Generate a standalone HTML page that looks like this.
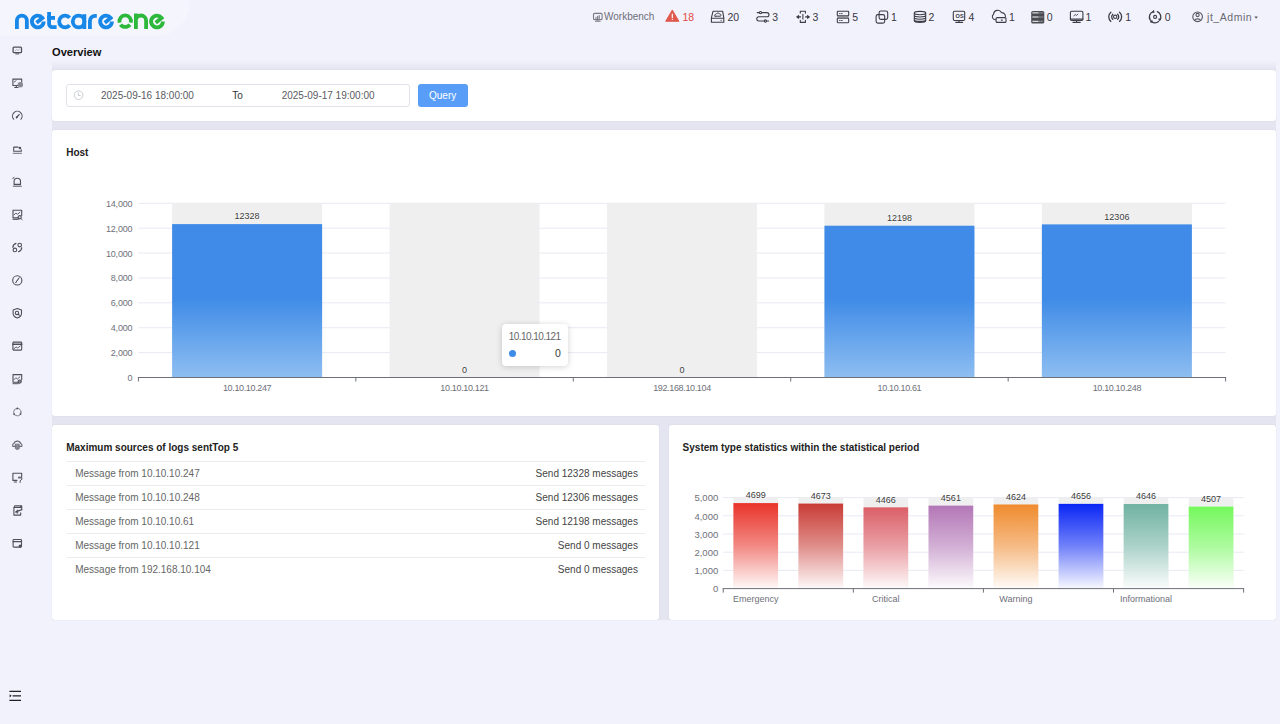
<!DOCTYPE html>
<html><head><meta charset="utf-8">
<style>
*{box-sizing:border-box;margin:0;padding:0}
html,body{width:1280px;height:724px;overflow:hidden;background:#f2f2fd;font-family:"Liberation Sans",sans-serif;position:relative}
.a{position:absolute;white-space:nowrap}
.blob{position:absolute;left:0;top:0;width:190px;height:36px;background:#f5f5fe;border-bottom-right-radius:34px}
.hdr{font-size:11px;color:#33333a;line-height:12px}
.num{top:12px;font-size:10.5px;line-height:10px;color:#38383f}
.wrap{position:absolute;left:52px;top:60px;width:1224px;height:560px;background:linear-gradient(#f2f2fd 0px,#e4e5f0 9px,#e4e5f0 100%)}
.card{position:absolute;background:#fff;border-radius:3px;box-shadow:0 0 2px rgba(40,40,90,0.07)}
.ttl{font-size:10px;font-weight:bold;color:#222;line-height:12px}
</style></head><body>
<div class="blob"></div>
<!-- logo -->
<svg class="a" style="left:0;top:0" width="180" height="40" viewBox="0 0 180 40">
<g fill="none" stroke="#1787e8" stroke-width="3.8">
<path d="M16.9,29 V20.5 A4.975,4.975 0 0 1 26.85,20.5 V29"/>
<path d="M43.70,21.50 A5.9,5.9 0 1 1 42.45,17.87 L36.50,22.80" stroke-linejoin="miter"/>
<path d="M49.1,11.9 V23.9 A3.3,3.3 0 0 0 52.4,27.2 H56.6"/>
<path d="M47.2,17.9 H55"/>
<path d="M69.62,17.71 A5.9,5.9 0 1 0 69.62,25.29"/>
<circle cx="78.6" cy="21.5" r="5.8"/>
<path d="M84.35,14.2 V29"/>
<path d="M89.9,29 V21 A5.2,5.2 0 0 1 95.1,15.8 H96.8"/>
<path d="M111.95,21.50 A5.9,5.9 0 1 1 110.70,17.87 L104.75,22.80" stroke-linejoin="miter"/>
</g>
<g fill="none" stroke="#2cb83a" stroke-width="3.8">
<path d="M119.62,22.59 A5.75,5.75 0 1 1 130.78,22.59"/><path d="M129.85,24.58 A5.75,5.75 0 0 1 120.55,24.58"/>
<path d="M135.9,29 V13.6 M135.9,20.6 A5.1,5.1 0 0 1 146.1,20.6 V29"/>
<path d="M162.90,21.50 A5.9,5.9 0 1 1 161.65,17.87 L155.70,22.80" stroke-linejoin="miter"/>
</g>
</svg>
<!-- header -->
<svg class="a" style="left:0;top:0" width="1280" height="36" viewBox="0 0 1280 36">
<g fill="none" stroke="#3d3d45" stroke-width="1.1" stroke-linecap="round" stroke-linejoin="round">
 <!-- workbench -->
 <g stroke="#7a7a84"><rect x="593.5" y="13.4" width="8.6" height="6.2" rx="1"/><path d="M597.8,19.8V21.2M595.5,21.3H600.1M596,18.4V17.3M597.6,18.4V16.3M599.2,18.4V15.6"/></g>
 <!-- warning -->
 <path d="M672.3,10.4 L678.8,21.2 H665.8 Z" fill="#e0584e" stroke="#e0584e"/>
 <path d="M672.3,14.2V17.6M672.3,19.4V19.5" stroke="#fff" stroke-width="1.2"/>
 <!-- drive -->
 <path d="M713,11.3 H722.7 L723.8,17.8 V22.3 H711.4 V17.8 Z M711.4,18.2 H723.8"/>
 <circle cx="721.1" cy="20.4" r="0.55" fill="#3d3d45" stroke="none"/>
 <path d="M715.1,16.2 H720.6 A1.4,1.4 0 0 0 719.7,13.9 A2.1,2.1 0 0 0 716.1,14.3 A1.1,1.1 0 0 0 715.1,16.2 Z" stroke-width="1"/>
 <!-- route -->
 <path d="M757.2,12.6 H766.9 A2.05,2.05 0 0 1 766.9,16.7 H758.9 A2.15,2.15 0 0 0 758.9,21 H768.7"/>
 <circle cx="760.5" cy="12.6" r="1.1" fill="#f2f2fd"/><circle cx="765.4" cy="21" r="1.1" fill="#f2f2fd"/>
 <!-- transfer -->
 <path d="M800.3,13.1 V11.2 H805.4 V13.1 M800.3,20.2 V22.4 H805.4 V20.2 M802.9,14.3 V19.1 M797.4,16.9 H800.6 M805.6,16.9 H808.8"/>
 <path d="M796.8,16.9 L798.6,15.6 V18.2 Z M809.3,16.9 L807.5,15.6 V18.2 Z" fill="#3d3d45"/>
 <!-- server -->
 <rect x="837.3" y="11.3" width="11.4" height="4.5" rx="0.6"/><rect x="837.3" y="18.3" width="11.4" height="4.4" rx="0.6"/>
 <rect x="837.3" y="15.9" width="11.4" height="2.3" fill="#8a8a92" stroke="none"/>
 <path d="M839.4,13.6H839.5M840.9,13.6H842.2M839.4,20.5H839.5M840.9,20.5H842.2" stroke-width="0.9"/>
 <!-- copy -->
 <rect x="879.1" y="11" width="8.6" height="8.4" rx="1.8"/><rect x="876.1" y="14.6" width="8.6" height="8.5" rx="1.8"/>
 <!-- database -->
 <ellipse cx="920" cy="13.1" rx="5.7" ry="1.7"/>
 <path d="M914.3,13.1 V20.8 A5.7,1.7 0 0 0 925.7,20.8 V13.1 M914.3,15.3 A5.7,1.7 0 0 0 925.7,15.3 M914.3,17.5 A5.7,1.7 0 0 0 925.7,17.5 M914.3,19.7 A5.7,1.7 0 0 0 925.7,19.7"/>
 <!-- os -->
 <rect x="953.3" y="11.3" width="11.4" height="9.2" rx="1.2"/><path d="M959,20.6V22.3M955.8,22.4H962.6"/>
 <!-- cloud -->
 <path d="M995.4,19.6 A2.9,2.9 0 0 1 993.6,14.3 A4.1,4.1 0 0 1 1001.4,12.6 A3.8,3.8 0 0 1 1005.4,16.6"/>
 <rect x="996.1" y="17.6" width="9.9" height="4.8" rx="1"/><path d="M1001.3,20.1H1002.3"/>
 <!-- rack -->
 <rect x="1031.2" y="10.9" width="13.1" height="12.6" rx="1.6" fill="#4a4a52" stroke="none"/>
 <path d="M1032.8,12.9H1038.2M1032.8,17H1038.2M1032.8,21.3H1038.2" stroke="#fff" stroke-width="1"/>
 <path d="M1039.4,12.9H1043M1039.4,17H1043M1039.4,21.3H1043" stroke="#b0b0b8" stroke-width="0.8" stroke-dasharray="0.8 0.9"/>
 <!-- monitor -->
 <rect x="1070.4" y="11.3" width="12.5" height="9.2" rx="1.2"/><path d="M1070.4,19.1H1082.9M1076.6,20.6V22.2M1073,22.4H1080.2"/>
 <path d="M1073.8,15.8 L1075.3,14.5 L1076.4,15.5 L1077.8,14.2" stroke-width="0.9"/>
 <!-- signal -->
 <circle cx="1115.2" cy="16.8" r="1.7"/>
 <path d="M1112.8,14.2 A3.6,3.6 0 0 0 1112.8,19.4 M1110.9,12.2 A6,6 0 0 0 1110.9,21.4 M1117.6,14.2 A3.6,3.6 0 0 1 1117.6,19.4 M1119.5,12.2 A6,6 0 0 1 1119.5,21.4" stroke-width="1.3"/>
 <!-- ring -->
 <circle cx="1155.1" cy="16.9" r="1.5"/>
 <path d="M1150.2,19.9 A5.7,5.7 0 0 1 1153.3,11.5 M1157.3,11.6 A5.7,5.7 0 0 1 1159.9,20 M1158.6,21.6 A5.7,5.7 0 0 1 1151.3,21.2" stroke-width="1.3"/>
 <path d="M1153.8,10.6 L1154.2,12.6 L1152.3,12.4 Z M1160.8,19.3 L1159.2,20.8 L1158.8,19 Z M1151,22.6 L1150.3,20.7 L1152.2,20.8 Z" fill="#3d3d45" stroke-width="0.6"/>
 <!-- user -->
 <g stroke="#55555d"><circle cx="1197.6" cy="16.8" r="4.8"/><circle cx="1197.6" cy="15" r="1.6"/><path d="M1194.6,20.6 A3.2,2.6 0 0 1 1200.6,20.6"/></g>
 <path d="M1254.4,16.4 H1257.9 L1256.15,18.8 Z" fill="#55555d" stroke="none"/>
</g>
<text x="955.4" y="17.7" font-family="Liberation Sans" font-weight="bold" font-size="5.6" fill="#3d3d45" letter-spacing="0.2">OS</text>
</svg>
<div class="a hdr" style="left:604px;top:12px;color:#6e6e78;font-size:10px;line-height:10px">Workbench</div>
<div class="a hdr" style="left:682.5px;top:12px;color:#e5483f;font-size:10.5px;line-height:10px">18</div>
<div class="a hdr num" style="left:727.5px">20</div>
<div class="a hdr num" style="left:772.2px">3</div>
<div class="a hdr num" style="left:812.5px">3</div>
<div class="a hdr num" style="left:852.2px">5</div>
<div class="a hdr num" style="left:891px">1</div>
<div class="a hdr num" style="left:928.5px">2</div>
<div class="a hdr num" style="left:968.5px">4</div>
<div class="a hdr num" style="left:1009px">1</div>
<div class="a hdr num" style="left:1046.8px">0</div>
<div class="a hdr num" style="left:1085.6px">1</div>
<div class="a hdr num" style="left:1125.2px">1</div>
<div class="a hdr num" style="left:1164.8px">0</div>
<div class="a hdr" style="left:1207px;top:12px;color:#6a6a72;font-size:10.5px;line-height:10px;letter-spacing:0.55px">jt_Admin</div>

<!-- sidebar -->
<svg class="a" style="left:0;top:36px" width="46" height="520" viewBox="0 36 46 520"><g fill="none" stroke="#4f4f58" stroke-width="1.1" stroke-linecap="round" stroke-linejoin="round"><g transform="translate(17.3,50.30)"><rect x="-4.2" y="-3.2" width="8.4" height="5.6" rx="1" stroke-width="1.3"/><path d="M-1.6,3.6H1.6" stroke-width="1"/><path d="M-2.2,0.6L-0.6,-0.8L0.6,0.2L2.2,-1.2" stroke-width="0.8" stroke="#9a9aa4"/></g><g transform="translate(17.3,83.17)"><path d="M2.2,2.4H-4.4V-4H4.4V-1"/><path d="M-1,2.5V4.2M-2.6,4.3H0.8"/><circle cx="3" cy="1.6" r="2.2" fill="#8a8a94" stroke="#8a8a94"/><path d="M-3,-1.2 L-1.2,-2.5" stroke-width="0.9"/></g><g transform="translate(17.3,116.04)"><path d="M-3.6,3.2 A4.8,4.8 0 1 1 3.6,3.2"/><path d="M-0.8,1.6 L1.8,-1.4" stroke-width="1.4"/><circle cx="-0.5" cy="1.3" r="1" fill="#4f4f58" stroke="none"/></g><g transform="translate(17.3,148.91)"><path d="M-3.6,-1.8V2.4H4V0.8M-3.6,-1.8H0.8"/><circle cx="2.6" cy="-0.9" r="1.3" fill="#4f4f58" stroke="none"/><path d="M-4,4.4H4.2" stroke="#8a8a94" stroke-width="1.2"/></g><g transform="translate(17.3,181.78)"><path d="M-3.2,2.6V-0.4 A3.2,3.2 0 0 1 3.2,-0.4 V2.6Z"/><path d="M-4,4.4H4M-4.6,-3 L-3.2,-4.6" stroke-width="1"/></g><g transform="translate(17.3,214.65)"><path d="M1.5,3.2H-4.3V-4.4H4.4V0.8"/><path d="M-3.2,0.2 L-1.5,-1.6 L0.3,-0.4 L2.6,-2.4" stroke-width="0.9"/><circle cx="2.4" cy="2.6" r="1.6"/><path d="M3.6,3.8L4.8,5M-4.3,4.7H1" stroke-width="1"/></g><g transform="translate(17.3,247.52)"><circle cx="2.4" cy="-2.4" r="1.8"/><circle cx="-2.4" cy="2.4" r="1.8"/><path d="M-4.39,-0.23 A4.4,4.4 0 0 1 -1.36,-4.18 M4.39,0.23 A4.4,4.4 0 0 1 1.36,4.18" stroke-width="1.25"/></g><g transform="translate(17.3,280.39)"><circle cx="0" cy="0" r="4.6"/><path d="M1.8,-2.6 L-0.4,0.4 L-1.8,2.6 L0.4,-0.4 Z" fill="#4f4f58" stroke-width="0.8"/></g><g transform="translate(17.3,313.26)"><path d="M0,-4.8 L4.2,-3.2 V0.2 C4.2,2.6 2.2,4 0,4.8 C-2.2,4 -4.2,2.6 -4.2,0.2 V-3.2 Z"/><circle cx="-0.3" cy="-0.3" r="1.7"/><path d="M0.9,0.9L2,2"/></g><g transform="translate(17.3,346.13)"><rect x="-4.4" y="-4" width="8.8" height="8" rx="0.8"/><path d="M-4.4,-1.9H4.4" stroke-width="1.6"/><path d="M-3.6,3 L-1.4,0.8 L0.4,1.8 L3,-0.2" stroke-width="0.9"/></g><g transform="translate(17.3,379.00)"><path d="M1.5,3.2H-4.3V-4.4H4.4V0.8"/><path d="M-3.2,0.6 L-1.5,-1.2 L0.3,0 L2.6,-2.2" stroke-width="0.9"/><circle cx="2.4" cy="2.6" r="1.6" fill="#8a8a94"/><path d="M-4.3,4.7H1" stroke-width="1"/></g><g transform="translate(17.3,411.87)"><circle cx="0" cy="0.3" r="3.7" stroke="#7a7a84" stroke-width="0.9"/><circle cx="0" cy="-3.4" r="0.9" fill="#4f4f58" stroke="none"/><circle cx="-3.2" cy="2.2" r="0.9" fill="#4f4f58" stroke="none"/><circle cx="3.2" cy="2.2" r="0.9" fill="#4f4f58" stroke="none"/></g><g transform="translate(17.3,444.74)"><path d="M-2.4,1.6 H-4.4 A1.9,1.9 0 0 1 -3.4,-1.2 A3.6,3.6 0 0 1 3.4,-1.2 A1.9,1.9 0 0 1 4.4,1.6 H2.4" stroke="#6a6a74"/><path d="M-1.9,-0.2V3.8A1.9,0.8 0 0 0 1.9,3.8V-0.2Z" fill="#8a8a94" stroke="#6a6a74" stroke-width="0.9"/></g><g transform="translate(17.3,477.61)"><path d="M-0.4,2.8H-4.4V-4.4H4.4V-1"/><path d="M-3,4.4H-0.8"/><path d="M1,0.2H4.6V1.6L2.8,3.2V4.8" stroke-width="1"/><path d="M1.8,0.2V-1M3.8,0.2V-1" stroke-width="0.8"/></g><g transform="translate(17.3,510.48)"><path d="M-3.4,-3V4.6H3.4V2.4M-3.4,-3 L-2.6,-4.6H4.4V-1.4 M3.4,-4.6V-3.2 M-3.4,-3H3.4"/><path d="M4.6,-0.8 L-1,1.2" stroke-width="1.2"/><path d="M-1.8,1.4 L0.4,-0.6 L0.6,2.6 Z" fill="#4f4f58" stroke-width="0.6"/></g><g transform="translate(17.3,543.35)"><rect x="-4.2" y="-3.8" width="8.4" height="7.6" rx="0.8"/><path d="M-4.2,-1.8H4.2" stroke-width="1.3"/><circle cx="2.8" cy="2.6" r="1.5" fill="#4f4f58" stroke="none"/></g></g></svg>
<svg class="a" style="left:0;top:680px" width="40" height="30" viewBox="0 680 40 30"><g stroke="#222" stroke-width="1.2"><path d="M9.4,691.4H21M12.6,695.8H21M9.4,700.4H21"/></g><path d="M9.6,694.2 L11.6,695.8 L9.6,697.4Z" fill="#222"/></svg>
<div class="a" style="left:52px;top:46px;font-size:11.1px;font-weight:bold;color:#111">Overview</div>

<div class="wrap">
 <div class="card" style="left:0;top:10px;width:1224px;height:51px"></div>
 <div class="card" style="left:0;top:70px;width:1224px;height:286px"></div>
 <div class="card" style="left:0;top:365px;width:607px;height:195px"></div>
 <div class="card" style="left:617px;top:365px;width:607px;height:195px"></div>
</div>
<div class="a" style="left:66px;top:84px;width:344px;height:23px;border:1px solid #e1e3ea;border-radius:3px"></div>
<svg class="a" style="left:72px;top:89px" width="14" height="14" viewBox="0 0 14 14"><g fill="none" stroke="#c3c6ce" stroke-width="0.9"><circle cx="6.6" cy="6.2" r="4.3"/><path d="M6.4,3.7V6.5H8.6"/></g></svg>
<div class="a" style="top:91px;font-size:10px;line-height:10px;color:#5a5a62;font-weight:normal;left:101.00px;">2025-09-16 18:00:00</div>
<div class="a" style="top:91px;font-size:10px;line-height:10px;color:#303036;font-weight:normal;left:232.30px;">To</div>
<div class="a" style="top:91px;font-size:10px;line-height:10px;color:#5a5a62;font-weight:normal;left:281.70px;">2025-09-17 19:00:00</div>
<div class="a" style="left:418px;top:84px;width:50px;height:23px;background:#589ef8;border-radius:3px"></div>
<div class="a" style="top:91px;font-size:10px;line-height:10px;color:#fff;font-weight:normal;left:429.00px;">Query</div>
<div class="a" style="top:148px;font-size:10px;line-height:10px;color:#222;font-weight:bold;left:66.20px;">Host</div>
<svg class="a" style="left:0;top:0" width="1280" height="724" viewBox="0 0 1280 724">
<defs><linearGradient id="hb" x1="0" y1="0" x2="0" y2="1"><stop offset="0" stop-color="#3f8be7"/><stop offset="0.48" stop-color="#3f8be7"/><stop offset="1" stop-color="#8ebef1"/></linearGradient>
<linearGradient id="g0" x1="0" y1="0" x2="0" y2="1"><stop offset="0" stop-color="#e9342a"/><stop offset="0.5" stop-color="#e9342a" stop-opacity="0.58"/><stop offset="1" stop-color="#e9342a" stop-opacity="0.03"/></linearGradient>
<linearGradient id="g1" x1="0" y1="0" x2="0" y2="1"><stop offset="0" stop-color="#c93c36"/><stop offset="0.5" stop-color="#c93c36" stop-opacity="0.58"/><stop offset="1" stop-color="#c93c36" stop-opacity="0.03"/></linearGradient>
<linearGradient id="g2" x1="0" y1="0" x2="0" y2="1"><stop offset="0" stop-color="#db5f68"/><stop offset="0.5" stop-color="#db5f68" stop-opacity="0.58"/><stop offset="1" stop-color="#db5f68" stop-opacity="0.03"/></linearGradient>
<linearGradient id="g3" x1="0" y1="0" x2="0" y2="1"><stop offset="0" stop-color="#b377b7"/><stop offset="0.5" stop-color="#b377b7" stop-opacity="0.58"/><stop offset="1" stop-color="#b377b7" stop-opacity="0.03"/></linearGradient>
<linearGradient id="g4" x1="0" y1="0" x2="0" y2="1"><stop offset="0" stop-color="#ef8b2e"/><stop offset="0.5" stop-color="#ef8b2e" stop-opacity="0.58"/><stop offset="1" stop-color="#ef8b2e" stop-opacity="0.03"/></linearGradient>
<linearGradient id="g5" x1="0" y1="0" x2="0" y2="1"><stop offset="0" stop-color="#0a26f5"/><stop offset="0.5" stop-color="#0a26f5" stop-opacity="0.58"/><stop offset="1" stop-color="#0a26f5" stop-opacity="0.03"/></linearGradient>
<linearGradient id="g6" x1="0" y1="0" x2="0" y2="1"><stop offset="0" stop-color="#70b2a2"/><stop offset="0.5" stop-color="#70b2a2" stop-opacity="0.58"/><stop offset="1" stop-color="#70b2a2" stop-opacity="0.03"/></linearGradient>
<linearGradient id="g7" x1="0" y1="0" x2="0" y2="1"><stop offset="0" stop-color="#74f85c"/><stop offset="0.5" stop-color="#74f85c" stop-opacity="0.58"/><stop offset="1" stop-color="#74f85c" stop-opacity="0.03"/></linearGradient>
</defs>
<rect x="138.4" y="352.11" width="1087.2" height="1" fill="#e8eaf4"/>
<rect x="138.4" y="327.23" width="1087.2" height="1" fill="#e8eaf4"/>
<rect x="138.4" y="302.34" width="1087.2" height="1" fill="#e8eaf4"/>
<rect x="138.4" y="277.46" width="1087.2" height="1" fill="#e8eaf4"/>
<rect x="138.4" y="252.57" width="1087.2" height="1" fill="#e8eaf4"/>
<rect x="138.4" y="227.69" width="1087.2" height="1" fill="#e8eaf4"/>
<rect x="138.4" y="202.80" width="1087.2" height="1" fill="#e8eaf4"/>
<rect x="172.12" y="203.30" width="150" height="174.20" fill="#efefef"/>
<rect x="172.12" y="224.10" width="150" height="153.40" fill="url(#hb)"/>
<rect x="389.56" y="203.30" width="150" height="174.20" fill="#efefef"/>
<rect x="607.00" y="203.30" width="150" height="174.20" fill="#efefef"/>
<rect x="824.44" y="203.30" width="150" height="174.20" fill="#efefef"/>
<rect x="824.44" y="225.72" width="150" height="151.78" fill="url(#hb)"/>
<rect x="1041.88" y="203.30" width="150" height="174.20" fill="#efefef"/>
<rect x="1041.88" y="224.38" width="150" height="153.12" fill="url(#hb)"/>
<rect x="137.9" y="377.0" width="1088.2" height="1" fill="#6e7079"/>
<rect x="137.90" y="377.5" width="1" height="4" fill="#6e7079"/>
<rect x="355.34" y="377.5" width="1" height="4" fill="#6e7079"/>
<rect x="572.78" y="377.5" width="1" height="4" fill="#6e7079"/>
<rect x="790.22" y="377.5" width="1" height="4" fill="#6e7079"/>
<rect x="1007.66" y="377.5" width="1" height="4" fill="#6e7079"/>
<rect x="1225.10" y="377.5" width="1" height="4" fill="#6e7079"/>
<rect x="723.2" y="569.90" width="520.4" height="1" fill="#e8eaf4"/>
<rect x="723.2" y="551.70" width="520.4" height="1" fill="#e8eaf4"/>
<rect x="723.2" y="533.50" width="520.4" height="1" fill="#e8eaf4"/>
<rect x="723.2" y="515.30" width="520.4" height="1" fill="#e8eaf4"/>
<rect x="723.2" y="497.10" width="520.4" height="1" fill="#e8eaf4"/>
<rect x="733.38" y="497.60" width="44.7" height="91.00" fill="#efefef"/>
<rect x="733.38" y="503.08" width="44.7" height="85.52" fill="#fff"/>
<rect x="733.38" y="503.08" width="44.7" height="85.52" fill="url(#g0)"/>
<rect x="798.42" y="497.60" width="44.7" height="91.00" fill="#efefef"/>
<rect x="798.42" y="503.55" width="44.7" height="85.05" fill="#fff"/>
<rect x="798.42" y="503.55" width="44.7" height="85.05" fill="url(#g1)"/>
<rect x="863.48" y="497.60" width="44.7" height="91.00" fill="#efefef"/>
<rect x="863.48" y="507.32" width="44.7" height="81.28" fill="#fff"/>
<rect x="863.48" y="507.32" width="44.7" height="81.28" fill="url(#g2)"/>
<rect x="928.52" y="497.60" width="44.7" height="91.00" fill="#efefef"/>
<rect x="928.52" y="505.59" width="44.7" height="83.01" fill="#fff"/>
<rect x="928.52" y="505.59" width="44.7" height="83.01" fill="url(#g3)"/>
<rect x="993.57" y="497.60" width="44.7" height="91.00" fill="#efefef"/>
<rect x="993.57" y="504.44" width="44.7" height="84.16" fill="#fff"/>
<rect x="993.57" y="504.44" width="44.7" height="84.16" fill="url(#g4)"/>
<rect x="1058.62" y="497.60" width="44.7" height="91.00" fill="#efefef"/>
<rect x="1058.62" y="503.86" width="44.7" height="84.74" fill="#fff"/>
<rect x="1058.62" y="503.86" width="44.7" height="84.74" fill="url(#g5)"/>
<rect x="1123.67" y="497.60" width="44.7" height="91.00" fill="#efefef"/>
<rect x="1123.67" y="504.04" width="44.7" height="84.56" fill="#fff"/>
<rect x="1123.67" y="504.04" width="44.7" height="84.56" fill="url(#g6)"/>
<rect x="1188.72" y="497.60" width="44.7" height="91.00" fill="#efefef"/>
<rect x="1188.72" y="506.57" width="44.7" height="82.03" fill="#fff"/>
<rect x="1188.72" y="506.57" width="44.7" height="82.03" fill="url(#g7)"/>
<rect x="722.7" y="588.1" width="521.4" height="1" fill="#6e7079"/>
<rect x="722.70" y="588.6" width="1" height="4" fill="#6e7079"/>
<rect x="852.80" y="588.6" width="1" height="4" fill="#6e7079"/>
<rect x="982.90" y="588.6" width="1" height="4" fill="#6e7079"/>
<rect x="1113.00" y="588.6" width="1" height="4" fill="#6e7079"/>
<rect x="1243.10" y="588.6" width="1" height="4" fill="#6e7079"/>
</svg>
<div class="a" style="top:374px;font-size:9px;line-height:9px;color:#6e7079;font-weight:normal;letter-spacing:-0.2px;right:1147.70px;">0</div>
<div class="a" style="top:349px;font-size:9px;line-height:9px;color:#6e7079;font-weight:normal;letter-spacing:-0.2px;right:1147.70px;">2,000</div>
<div class="a" style="top:324px;font-size:9px;line-height:9px;color:#6e7079;font-weight:normal;letter-spacing:-0.2px;right:1147.70px;">4,000</div>
<div class="a" style="top:299px;font-size:9px;line-height:9px;color:#6e7079;font-weight:normal;letter-spacing:-0.2px;right:1147.70px;">6,000</div>
<div class="a" style="top:274px;font-size:9px;line-height:9px;color:#6e7079;font-weight:normal;letter-spacing:-0.2px;right:1147.70px;">8,000</div>
<div class="a" style="top:250px;font-size:9px;line-height:9px;color:#6e7079;font-weight:normal;letter-spacing:-0.2px;right:1147.70px;">10,000</div>
<div class="a" style="top:225px;font-size:9px;line-height:9px;color:#6e7079;font-weight:normal;letter-spacing:-0.2px;right:1147.70px;">12,000</div>
<div class="a" style="top:200px;font-size:9px;line-height:9px;color:#6e7079;font-weight:normal;letter-spacing:-0.2px;right:1147.70px;">14,000</div>
<div class="a" style="top:212px;font-size:9px;line-height:9px;color:#3a3a3a;font-weight:normal;left:147.12px;width:200px;text-align:center;text-shadow:0 0 2px #fff,0 0 1px #fff;">12328</div>
<div class="a" style="top:384px;font-size:9px;line-height:9px;color:#6e7079;font-weight:normal;letter-spacing:-0.35px;left:147.12px;width:200px;text-align:center;">10.10.10.247</div>
<div class="a" style="top:366px;font-size:9px;line-height:9px;color:#3a3a3a;font-weight:normal;left:364.56px;width:200px;text-align:center;text-shadow:0 0 2px #fff,0 0 1px #fff;">0</div>
<div class="a" style="top:384px;font-size:9px;line-height:9px;color:#6e7079;font-weight:normal;letter-spacing:-0.35px;left:364.56px;width:200px;text-align:center;">10.10.10.121</div>
<div class="a" style="top:366px;font-size:9px;line-height:9px;color:#3a3a3a;font-weight:normal;left:582.00px;width:200px;text-align:center;text-shadow:0 0 2px #fff,0 0 1px #fff;">0</div>
<div class="a" style="top:384px;font-size:9px;line-height:9px;color:#6e7079;font-weight:normal;letter-spacing:-0.35px;left:582.00px;width:200px;text-align:center;">192.168.10.104</div>
<div class="a" style="top:214px;font-size:9px;line-height:9px;color:#3a3a3a;font-weight:normal;left:799.44px;width:200px;text-align:center;text-shadow:0 0 2px #fff,0 0 1px #fff;">12198</div>
<div class="a" style="top:384px;font-size:9px;line-height:9px;color:#6e7079;font-weight:normal;letter-spacing:-0.35px;left:799.44px;width:200px;text-align:center;">10.10.10.61</div>
<div class="a" style="top:213px;font-size:9px;line-height:9px;color:#3a3a3a;font-weight:normal;left:1016.88px;width:200px;text-align:center;text-shadow:0 0 2px #fff,0 0 1px #fff;">12306</div>
<div class="a" style="top:384px;font-size:9px;line-height:9px;color:#6e7079;font-weight:normal;letter-spacing:-0.35px;left:1016.88px;width:200px;text-align:center;">10.10.10.248</div>
<div class="a" style="top:584px;font-size:9.5px;line-height:9.5px;color:#6e7079;font-weight:normal;right:561.80px;">0</div>
<div class="a" style="top:566px;font-size:9.5px;line-height:9.5px;color:#6e7079;font-weight:normal;right:561.80px;">1,000</div>
<div class="a" style="top:548px;font-size:9.5px;line-height:9.5px;color:#6e7079;font-weight:normal;right:561.80px;">2,000</div>
<div class="a" style="top:530px;font-size:9.5px;line-height:9.5px;color:#6e7079;font-weight:normal;right:561.80px;">3,000</div>
<div class="a" style="top:512px;font-size:9.5px;line-height:9.5px;color:#6e7079;font-weight:normal;right:561.80px;">4,000</div>
<div class="a" style="top:493px;font-size:9.5px;line-height:9.5px;color:#6e7079;font-weight:normal;right:561.80px;">5,000</div>
<div class="a" style="top:491px;font-size:9px;line-height:9px;color:#3a3a3a;font-weight:normal;left:655.73px;width:200px;text-align:center;text-shadow:0 0 2px #fff,0 0 1px #fff;">4699</div>
<div class="a" style="top:492px;font-size:9px;line-height:9px;color:#3a3a3a;font-weight:normal;left:720.77px;width:200px;text-align:center;text-shadow:0 0 2px #fff,0 0 1px #fff;">4673</div>
<div class="a" style="top:496px;font-size:9px;line-height:9px;color:#3a3a3a;font-weight:normal;left:785.83px;width:200px;text-align:center;text-shadow:0 0 2px #fff,0 0 1px #fff;">4466</div>
<div class="a" style="top:494px;font-size:9px;line-height:9px;color:#3a3a3a;font-weight:normal;left:850.88px;width:200px;text-align:center;text-shadow:0 0 2px #fff,0 0 1px #fff;">4561</div>
<div class="a" style="top:493px;font-size:9px;line-height:9px;color:#3a3a3a;font-weight:normal;left:915.92px;width:200px;text-align:center;text-shadow:0 0 2px #fff,0 0 1px #fff;">4624</div>
<div class="a" style="top:492px;font-size:9px;line-height:9px;color:#3a3a3a;font-weight:normal;left:980.97px;width:200px;text-align:center;text-shadow:0 0 2px #fff,0 0 1px #fff;">4656</div>
<div class="a" style="top:492px;font-size:9px;line-height:9px;color:#3a3a3a;font-weight:normal;left:1046.02px;width:200px;text-align:center;text-shadow:0 0 2px #fff,0 0 1px #fff;">4646</div>
<div class="a" style="top:495px;font-size:9px;line-height:9px;color:#3a3a3a;font-weight:normal;left:1111.07px;width:200px;text-align:center;text-shadow:0 0 2px #fff,0 0 1px #fff;">4507</div>
<div class="a" style="top:595px;font-size:9px;line-height:9px;color:#6e7079;font-weight:normal;left:655.73px;width:200px;text-align:center;">Emergency</div>
<div class="a" style="top:595px;font-size:9px;line-height:9px;color:#6e7079;font-weight:normal;left:785.83px;width:200px;text-align:center;">Critical</div>
<div class="a" style="top:595px;font-size:9px;line-height:9px;color:#6e7079;font-weight:normal;left:915.92px;width:200px;text-align:center;">Warning</div>
<div class="a" style="top:595px;font-size:9px;line-height:9px;color:#6e7079;font-weight:normal;left:1046.02px;width:200px;text-align:center;">Informational</div>
<div class="a" style="left:502px;top:324px;width:66px;height:42px;background:#fff;border-radius:4px;box-shadow:0 1px 6px rgba(0,0,0,0.18)"></div>
<div class="a" style="top:332px;font-size:10px;line-height:10px;color:#666;font-weight:normal;letter-spacing:-0.55px;left:508.80px;">10.10.10.121</div>
<div class="a" style="left:509px;top:349.6px;width:7px;height:7px;border-radius:50%;background:#3f8ce9"></div>
<div class="a" style="top:348px;font-size:10.5px;line-height:10.5px;color:#3a3a3a;font-weight:normal;left:555.00px;">0</div>
<div class="a" style="top:443px;font-size:10px;line-height:10px;color:#222;font-weight:bold;left:66.20px;">Maximum sources of logs sentTop 5</div>
<div class="a" style="left:66.7px;top:461px;width:578px;height:1px;background:#ebebeb"></div>
<div class="a" style="top:469px;font-size:10px;line-height:10px;color:#666;font-weight:normal;left:75.20px;">Message from 10.10.10.247</div>
<div class="a" style="top:469px;font-size:10px;line-height:10px;color:#444;font-weight:normal;right:642.10px;">Send 12328 messages</div>
<div class="a" style="left:66.7px;top:485px;width:578px;height:1px;background:#ebebeb"></div>
<div class="a" style="top:493px;font-size:10px;line-height:10px;color:#666;font-weight:normal;left:75.20px;">Message from 10.10.10.248</div>
<div class="a" style="top:493px;font-size:10px;line-height:10px;color:#444;font-weight:normal;right:642.10px;">Send 12306 messages</div>
<div class="a" style="left:66.7px;top:509px;width:578px;height:1px;background:#ebebeb"></div>
<div class="a" style="top:517px;font-size:10px;line-height:10px;color:#666;font-weight:normal;left:75.20px;">Message from 10.10.10.61</div>
<div class="a" style="top:517px;font-size:10px;line-height:10px;color:#444;font-weight:normal;right:642.10px;">Send 12198 messages</div>
<div class="a" style="left:66.7px;top:533px;width:578px;height:1px;background:#ebebeb"></div>
<div class="a" style="top:541px;font-size:10px;line-height:10px;color:#666;font-weight:normal;left:75.20px;">Message from 10.10.10.121</div>
<div class="a" style="top:541px;font-size:10px;line-height:10px;color:#444;font-weight:normal;right:642.10px;">Send 0 messages</div>
<div class="a" style="left:66.7px;top:557px;width:578px;height:1px;background:#ebebeb"></div>
<div class="a" style="top:565px;font-size:10px;line-height:10px;color:#666;font-weight:normal;left:75.20px;">Message from 192.168.10.104</div>
<div class="a" style="top:565px;font-size:10px;line-height:10px;color:#444;font-weight:normal;right:642.10px;">Send 0 messages</div>
<div class="a" style="top:443px;font-size:10px;line-height:10px;color:#222;font-weight:bold;left:682.60px;">System type statistics within the statistical period</div>
</body></html>
